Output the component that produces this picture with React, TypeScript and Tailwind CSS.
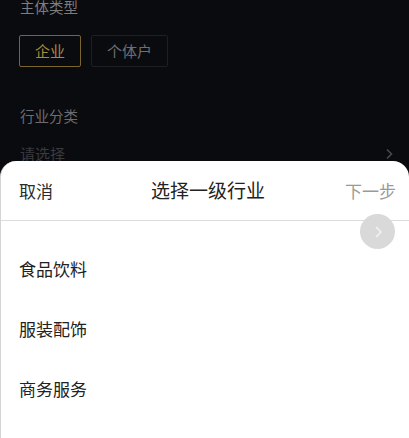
import React from "react";

const font = { fontFamily: '"Noto Sans CJK SC", "Noto Sans", sans-serif' };

export default function App() {
  return (
    <div className="relative w-[409px] h-[438px] overflow-hidden bg-[#0a0b0f]" style={font}>
      <div className="flex flex-col px-[20px]">
        <div className="text-[14.5px] leading-[16px] text-[#7d7d80] -mt-[1px]">主体类型</div>
        <div className="flex gap-[10px] mt-[20px] -ml-[1px]">
          <div className="w-[62px] h-[32px] flex items-center justify-center border border-[#7a6430] rounded-[2px] text-[15px] text-[#a88a3c]">企业</div>
          <div className="w-[77px] h-[32px] flex items-center justify-center border border-[#1e1f24] rounded-[2px] text-[15px] text-[#6e6e72]">个体户</div>
        </div>
        <div className="mt-[41px] text-[14.5px] leading-[16px] text-[#6c6c70]">行业分类</div>
        <div className="mt-[22px] flex items-center justify-between">
          <span className="text-[15px] leading-[16px] text-[#3a3a3e]">请选择</span>
          <svg width="8" height="12" viewBox="0 0 8 12" className="mr-[-4px]">
            <path d="M2 1.5 L6.5 6 L2 10.5" stroke="#4a4a4e" strokeWidth="1.6" fill="none" />
          </svg>
        </div>
      </div>

      <div className="absolute left-0 right-0 top-[161px] bottom-0 bg-white rounded-t-[16px] border-l border-[#d4d4d4] flex flex-col">
        <div className="h-[59px] flex items-center justify-between pl-[18px] pr-[13px] relative">
          <span className="text-[17px] text-[#2a2a2a]">取消</span>
          <span className="absolute left-0 right-0 text-center text-[19px] text-[#222] pointer-events-none pl-[6px]">选择一级行业</span>
          <span className="text-[17px] text-[#9a9a9a]">下一步</span>
        </div>
        <div className="h-px bg-[#dcdcdc]" />
        <div className="absolute left-[359px] top-[53px] w-[35px] h-[35px] rounded-full bg-[#d9d9d9] flex items-center justify-center">
          <svg width="10" height="14" viewBox="0 0 10 14">
            <path d="M3 2 L8 7 L3 12" stroke="#f2f2f2" strokeWidth="1.5" fill="none" />
          </svg>
        </div>
        <div className="flex flex-col pt-[18px] pl-[18px]">
          {["食品饮料", "服装配饰", "商务服务"].map((t) => (
            <div key={t} className="h-[60px] flex items-center text-[17px] text-[#222]">
              {t}
            </div>
          ))}
        </div>
      </div>
    </div>
  );
}
